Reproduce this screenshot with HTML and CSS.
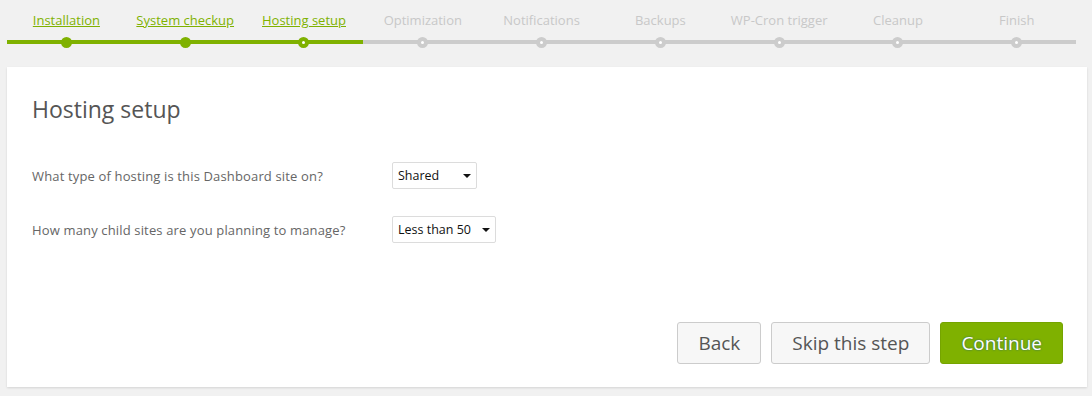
FILE: index.html
```html
<html><head>
  <title>Setup Wizard - Hosting setup</title>
  <link rel="stylesheet" href="styles.css">
</head>
<body>
  <div class="wizard">
    <ul class="steps">
      <li class="step done"><a href="#">Installation</a><span class="track"><i class="dot"></i></span></li>
      <li class="step done"><a href="#">System checkup</a><span class="track"><i class="dot"></i></span></li>
      <li class="step current"><a href="#">Hosting setup</a><span class="track"><i class="dot"></i></span></li>
      <li class="step"><span class="label">Optimization</span><span class="track"><i class="dot"></i></span></li>
      <li class="step"><span class="label">Notifications</span><span class="track"><i class="dot"></i></span></li>
      <li class="step"><span class="label">Backups</span><span class="track"><i class="dot"></i></span></li>
      <li class="step"><span class="label">WP-Cron trigger</span><span class="track"><i class="dot"></i></span></li>
      <li class="step"><span class="label">Cleanup</span><span class="track"><i class="dot"></i></span></li>
      <li class="step"><span class="label">Finish</span><span class="track"><i class="dot"></i></span></li>
    </ul>

    <div class="card">
      <h1>Hosting setup</h1>

      <div class="form-rows">
        <div class="row">
          <label for="hostingType">What type of hosting is this Dashboard site on?</label>
          <div class="select-wrap w-shared">
            <select id="hostingType">
              <option>Shared</option>
              <option>VPS</option>
              <option>Dedicated</option>
            </select>
          </div>
        </div>
        <div class="row">
          <label for="childSites">How many child sites are you planning to manage?</label>
          <div class="select-wrap w-sites">
            <select id="childSites">
              <option>Less than 50</option>
              <option>50 - 200</option>
              <option>More than 200</option>
            </select>
          </div>
        </div>
      </div>

      <div class="actions">
        <button class="btn">Back</button>
        <button class="btn">Skip this step</button>
        <button class="btn btn-primary">Continue</button>
      </div>
    </div>
  </div>
</body></html>
```

FILE: styles.css
```css
* {
  margin: 0;
  padding: 0;
  box-sizing: border-box;
  font-family: 'Open Sans', 'Noto Sans', sans-serif;
}

body {
  background: #f1f1f1;
}

.wizard {
  padding: 0 5px 0 7px;
}

/* progress steps */
.steps {
  list-style: none;
  display: flex;
  width: 99%;
  padding-top: 11px;
}

.step {
  flex: 1;
  display: flex;
  flex-direction: column;
  align-items: center;
  gap: 7px;
}

.step a,
.step .label {
  font-size: 13px;
  line-height: 18px;
  white-space: nowrap;
}

.step a {
  color: #7fb100;
  text-decoration: underline;
}

.step .label {
  color: #c8c8c8;
}

.track {
  position: relative;
  width: 100%;
  height: 12px;
  display: flex;
  align-items: center;
  justify-content: center;
}

.track::before {
  content: '';
  position: absolute;
  left: 0;
  right: 0;
  top: 4px;
  height: 4px;
  background: #cccccc;
}

.done .track::before,
.current .track::before {
  background: #7fb100;
}

.dot {
  position: relative;
  width: 11px;
  height: 11px;
  border-radius: 50%;
  border: 4px solid #cccccc;
  background: #fff;
}

.done .dot {
  border-color: #7fb100;
  background: #7fb100;
}

.current .dot {
  border-color: #7fb100;
}

/* card */
.card {
  margin-top: 19px;
  height: 320px;
  background: #fff;
  box-shadow: 0 1px 2px rgba(0,0,0,0.12);
  padding: 27px 24px 23px 25px;
  display: flex;
  flex-direction: column;
}

.card h1 {
  font-size: 23px;
  font-weight: normal;
  line-height: 30px;
  color: #555;
}

.form-rows {
  margin-top: 38px;
  display: flex;
  flex-direction: column;
  gap: 27px;
}

.row {
  display: flex;
  align-items: center;
  height: 27px;
}

.row label {
  width: 360px;
  font-size: 13px;
  color: #666;
  letter-spacing: 0.15px;
}

.select-wrap {
  position: relative;
  height: 27px;
}

.select-wrap::after {
  content: '';
  position: absolute;
  right: 6px;
  top: 12px;
  border-left: 4px solid transparent;
  border-right: 4px solid transparent;
  border-top: 4px solid #111;
  pointer-events: none;
}

.w-shared { width: 85px; }
.w-sites { width: 104px; }

select {
  appearance: none;
  -webkit-appearance: none;
  width: 100%;
  height: 100%;
  border: 1px solid #dcdcdc;
  border-radius: 2px;
  background: #fff;
  padding: 0 16px 0 5px;
  font-size: 12.5px;
  color: #111;
  outline: none;
}

/* buttons */
.actions {
  margin-top: auto;
  display: flex;
  justify-content: flex-end;
  gap: 10px;
}

.btn {
  height: 42px;
  padding: 0 20px;
  border: 1px solid #cccccc;
  border-radius: 3px;
  background: #f7f7f7;
  color: #555;
  font-size: 19px;
  cursor: pointer;
}

.btn-primary {
  background: #7fb100;
  border-color: #75a400;
  color: #fff;
  text-shadow: 0 0 2px #1d5a7a;
}
```
